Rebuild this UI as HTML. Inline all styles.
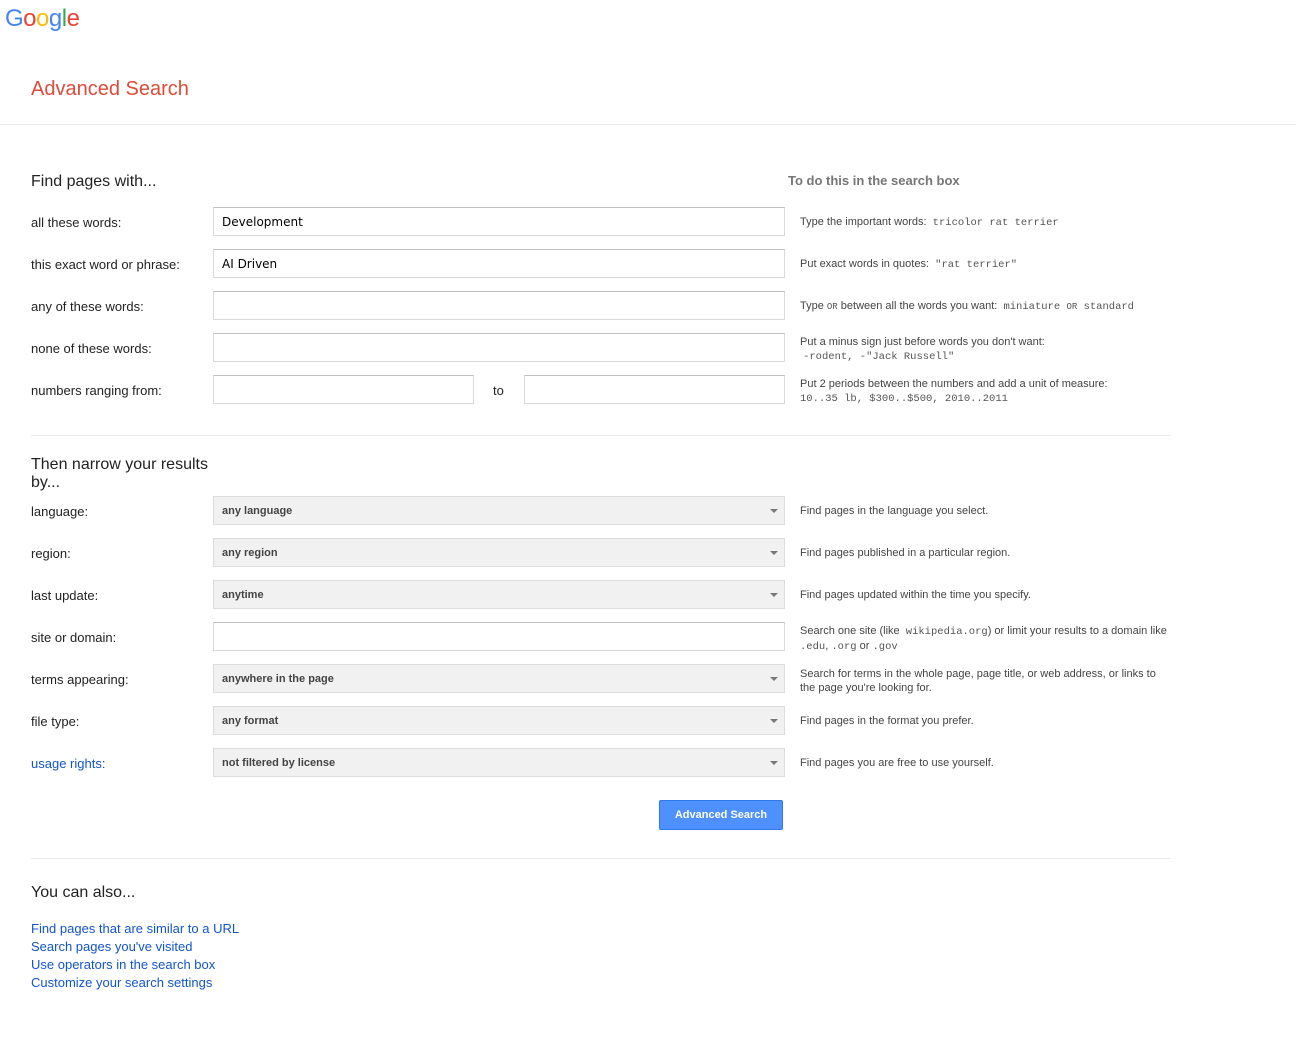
<!DOCTYPE html>
<html><head><meta charset="utf-8"><style>
*{box-sizing:border-box;margin:0;padding:0}
body{width:1296px;height:1049px;background:#fff;font-family:"Liberation Sans",Arial,sans-serif;color:#222;position:relative;overflow:hidden}
.a{position:absolute;white-space:nowrap}
.lbl{font-size:13px;color:#222;left:31px}
.in{position:absolute;left:213px;width:572px;height:29px;border:1px solid #d9d9d9;border-top-color:#c0c0c0;background:#fff;padding:7px 8px;font-family:"DejaVu Sans",sans-serif;font-size:12px;color:#000}
.sel{position:absolute;left:213px;width:572px;height:29px;border:1px solid #dcdcdc;background:#f1f1f1;font-size:11px;font-weight:bold;padding:8px 8px;color:#444}
.sel:after{content:"";position:absolute;right:6px;top:12px;border-left:4px solid transparent;border-right:4px solid transparent;border-top:4px solid #777}
.h{font-size:11px;color:#444;left:800px}
.m{font-family:"Liberation Mono",monospace;font-size:10.5px;color:#555}
.hd{font-size:16px;color:#222;left:31px}
.lk{font-size:13px;color:#1155cc;left:31px}
</style></head><body>
<div class="a" style="left:5px;top:5px;font-size:24px;letter-spacing:-0.5px"><span style="color:#4285f4">G</span><span style="color:#ea4335">o</span><span style="color:#fbbc05">o</span><span style="color:#4285f4">g</span><span style="color:#34a853">l</span><span style="color:#ea4335">e</span></div>
<div class="a" style="left:31px;top:78px;font-size:20px;color:#dd4b39">Advanced Search</div>
<div class="a" style="left:0;top:124px;width:1296px;height:1px;background:#ebebeb"></div>

<div class="a hd" style="top:173px">Find pages with...</div>
<div class="a" style="left:788px;top:173px;font-size:13px;font-weight:bold;color:#767676">To do this in the search box</div>

<div class="a lbl" style="top:215px">all these words:</div>
<div class="in" style="top:207px">Development</div>
<div class="a h" style="top:216px">Type the important words: &nbsp;<span class="m">tricolor rat terrier</span></div>

<div class="a lbl" style="top:257px">this exact word or phrase:</div>
<div class="in" style="top:249px">AI Driven</div>
<div class="a h" style="top:258px">Put exact words in quotes: &nbsp;<span class="m">"rat terrier"</span></div>

<div class="a lbl" style="top:299px">any of these words:</div>
<div class="in" style="top:291px"></div>
<div class="a h" style="top:300px">Type <span class="m" style="font-size:9px">OR</span> between all the words you want: &nbsp;<span class="m">miniature <span style="font-size:9px">OR</span> standard</span></div>

<div class="a lbl" style="top:341px">none of these words:</div>
<div class="in" style="top:333px"></div>
<div class="a h" style="top:335px;line-height:14px">Put a minus sign just before words you don't want:<br>&nbsp;<span class="m">-rodent, -"Jack Russell"</span></div>

<div class="a lbl" style="top:383px">numbers ranging from:</div>
<div class="in" style="top:375px;width:261px"></div>
<div class="a" style="left:493px;top:383px;font-size:13px">to</div>
<div class="in" style="top:375px;left:524px;width:261px"></div>
<div class="a h" style="top:377px;line-height:14px">Put 2 periods between the numbers and add a unit of measure:<br><span class="m">10..35 lb, $300..$500, 2010..2011</span></div>

<div class="a" style="left:31px;top:435px;width:1140px;height:1px;background:#ebebeb"></div>

<div class="a hd" style="top:456px;line-height:18px">Then narrow your results<br>by...</div>

<div class="a lbl" style="top:504px">language:</div>
<div class="sel" style="top:496px">any language</div>
<div class="a h" style="top:505px">Find pages in the language you select.</div>

<div class="a lbl" style="top:546px">region:</div>
<div class="sel" style="top:538px">any region</div>
<div class="a h" style="top:547px">Find pages published in a particular region.</div>

<div class="a lbl" style="top:588px">last update:</div>
<div class="sel" style="top:580px">anytime</div>
<div class="a h" style="top:589px">Find pages updated within the time you specify.</div>

<div class="a lbl" style="top:630px">site or domain:</div>
<div class="in" style="top:622px"></div>
<div class="a h" style="top:624px;line-height:14px">Search one site (like &nbsp;<span class="m">wikipedia.org</span>) or limit your results to a domain like<br><span class="m">.edu</span>, <span class="m">.org</span> or <span class="m">.gov</span></div>

<div class="a lbl" style="top:672px">terms appearing:</div>
<div class="sel" style="top:664px">anywhere in the page</div>
<div class="a h" style="top:667px;line-height:14px">Search for terms in the whole page, page title, or web address, or links to<br>the page you're looking for.</div>

<div class="a lbl" style="top:714px">file type:</div>
<div class="sel" style="top:706px">any format</div>
<div class="a h" style="top:715px">Find pages in the format you prefer.</div>

<div class="a lbl" style="top:756px;color:#1155cc">usage rights:</div>
<div class="sel" style="top:748px">not filtered by license</div>
<div class="a h" style="top:757px">Find pages you are free to use yourself.</div>

<div class="a" style="left:659px;top:800px;width:124px;height:30px;background:#4d90fe;border:1px solid #3079ed;border-radius:2px;color:#fff;font-size:11px;font-weight:bold;text-align:center;line-height:28px">Advanced Search</div>

<div class="a" style="left:31px;top:858px;width:1140px;height:1px;background:#ebebeb"></div>

<div class="a hd" style="top:884px">You can also...</div>
<div class="a lk" style="top:921px">Find pages that are similar to a URL</div>
<div class="a lk" style="top:939px">Search pages you've visited</div>
<div class="a lk" style="top:957px">Use operators in the search box</div>
<div class="a lk" style="top:975px">Customize your search settings</div>
</body></html>
